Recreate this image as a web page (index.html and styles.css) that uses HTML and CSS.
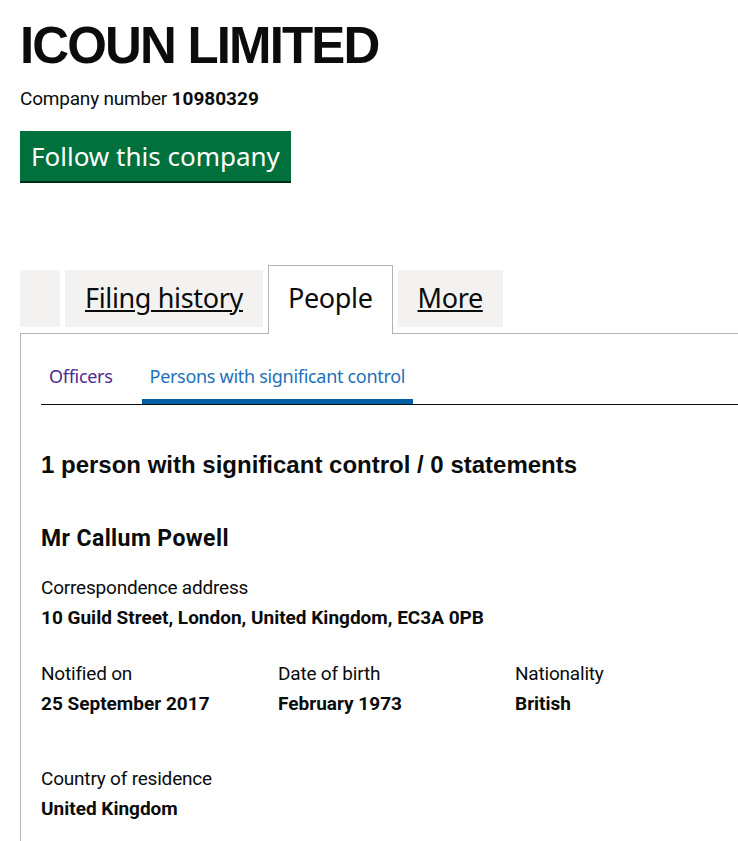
FILE: index.html
```html
<!DOCTYPE html>
<html lang="en">
<head>
    <meta charset="UTF-8">
    <meta name="viewport" content="width=device-width, initial-scale=1.0">
    <title>ICOUN LIMITED - People</title>
    <link rel="stylesheet" href="styles.css">
</head>
<body>
<div class="page">
    <div class="company-header">
        <h1 class="company-name">ICOUN LIMITED</h1>
        <p class="company-number">Company number <strong>10980329</strong></p>
        <button class="follow">Follow this company</button>
    </div>

    <ul class="tabs">
        <li class="tab tab-blank"></li>
        <li class="tab"><a href="#">Filing history</a></li>
        <li class="tab tab-selected">People</li>
        <li class="tab"><a href="#">More</a></li>
    </ul>

    <div class="panel">
        <ul class="sub-tabs">
            <li class="sub-tab"><a href="#" class="visited">Officers</a></li>
            <li class="sub-tab sub-tab-selected"><a href="#">Persons with significant control</a></li>
        </ul>

        <h2 class="psc-count">1 person with significant control / 0 statements</h2>

        <div class="appointment">
            <h3 class="person-name">Mr Callum Powell</h3>

            <dl class="field">
                <dt>Correspondence address</dt>
                <dd>10 Guild Street, London, United Kingdom, EC3A 0PB</dd>
            </dl>

            <div class="field-row">
                <dl class="field">
                    <dt>Notified on</dt>
                    <dd>25 September 2017</dd>
                </dl>
                <dl class="field">
                    <dt>Date of birth</dt>
                    <dd>February 1973</dd>
                </dl>
                <dl class="field">
                    <dt>Nationality</dt>
                    <dd>British</dd>
                </dl>
            </div>

            <dl class="field">
                <dt>Country of residence</dt>
                <dd>United Kingdom</dd>
            </dl>
        </div>
    </div>
</div>
</body>
</html>
```

FILE: styles.css
```css
html, body {
    overflow: hidden;
}

body {
    margin: 0;
    font-family: Roboto, Arial, sans-serif;
    color: #0b0c0c;
}

.page {
    width: 960px;
    padding: 0 20px;
}

.company-header {
    padding-top: 17px;
}

.company-name {
    margin: 0;
    font-family: "Liberation Sans", Arial, sans-serif;
    font-size: 51px;
    line-height: 57px;
    letter-spacing: -1.85px;
    font-weight: bold;
}

.company-number {
    margin: 12px 0 0;
    font-size: 19px;
    line-height: 25px;
    letter-spacing: -0.2px;
}

.company-number strong {
    font-weight: bold;
    letter-spacing: 0;
}

.follow {
    display: block;
    margin-top: 20px;
    padding: 0 11px;
    height: 50px;
    background: #00703c;
    color: #fff;
    border: none;
    border-radius: 0;
    box-shadow: 0 2px 0 #002d18;
    font-family: "Noto Sans", Arial, sans-serif;
    font-size: 26px;
    line-height: 50px;
    cursor: pointer;
}

.tabs {
    list-style: none;
    margin: 84px 0 0;
    padding: 0;
    display: flex;
    align-items: flex-start;
}

.tab {
    margin-top: 5px;
    margin-right: 5px;
    padding: 10px 20px 12px;
    height: 35px;
    background: #f3f2f1;
    font-family: "Noto Sans", Arial, sans-serif;
    font-size: 27px;
    line-height: 35px;
    letter-spacing: -0.35px;
}

.tab a {
    color: #0b0c0c;
    text-decoration: underline;
    text-underline-offset: 2px;
    text-decoration-thickness: 2px;
}

.tab-blank {
    width: 0;
}

.tab-selected {
    margin-top: 0;
    margin-bottom: -1px;
    padding: 14px 19px 19px;
    background: #fff;
    border: 1px solid #b1b4b6;
    border-bottom: none;
    position: relative;
    z-index: 1;
}

.panel {
    border-top: 1px solid #b1b4b6;
    border-left: 1px solid #b1b4b6;
    padding: 27px 0 0 20px;
    height: 600px;
}

.sub-tabs {
    list-style: none;
    margin: 0;
    padding: 0;
    display: flex;
    align-items: flex-start;
    border-bottom: 1px solid #0b0c0c;
}

.sub-tab {
    margin-right: 21px;
    padding: 0 8px 13px;
    font-family: "Noto Sans", Arial, sans-serif;
    font-size: 18px;
    line-height: 30px;
    letter-spacing: -0.3px;
}

.sub-tab a {
    color: #1d70b8;
    text-decoration: none;
}

.sub-tab a.visited {
    color: #4c2c92;
}

.sub-tab-selected {
    padding-bottom: 8px;
    border-bottom: 5px solid #005ea5;
}

.psc-count {
    margin: 45px 0 0;
    font-family: "Liberation Sans", Arial, sans-serif;
    font-size: 24px;
    line-height: 30px;
    font-weight: bold;
}

.appointment {
    margin-top: 44px;
}

.person-name {
    margin: 0;
    font-size: 23px;
    line-height: 30px;
    letter-spacing: 0.4px;
    font-weight: bold;
}

.field {
    margin: 21px 0 0;
}

.field dt {
    font-size: 19px;
    line-height: 25px;
    letter-spacing: -0.2px;
}

.field dd {
    margin: 5px 0 0;
    font-size: 19px;
    line-height: 25px;
    font-weight: bold;
}

.field-row {
    display: flex;
    margin-top: 31px;
}

.field-row .field {
    width: 237px;
    margin: 0;
}

.field-row + .field {
    margin-top: 50px;
}
```
